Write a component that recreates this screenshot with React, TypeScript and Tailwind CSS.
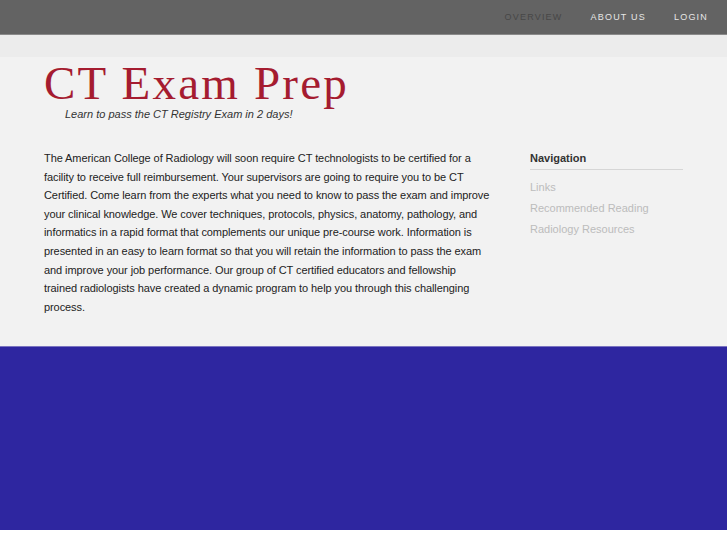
import React from 'react';

const navItems = [
  { label: 'OVERVIEW', active: true },
  { label: 'ABOUT US', active: false },
  { label: 'LOGIN', active: false },
];

const sideLinks = ['Links', 'Recommended Reading', 'Radiology Resources'];

const bodyLines = [
  'The American College of Radiology will soon require CT technologists to be certified for a',
  'facility to receive full reimbursement. Your supervisors are going to require you to be CT',
  'Certified. Come learn from the experts what you need to know to pass the exam and improve',
  'your clinical knowledge. We cover techniques, protocols, physics, anatomy, pathology, and',
  'informatics in a rapid format that complements our unique pre-course work. Information is',
  'presented in an easy to learn format so that you will retain the information to pass the exam',
  'and improve your job performance. Our group of CT certified educators and fellowship',
  'trained radiologists have created a dynamic program to help you through this challenging',
  'process.',
];

const App: React.FC = () => {
  return (
    <div className="min-h-[545px] bg-white font-['Liberation_Sans',Arial,sans-serif]">
      {/* top bar */}
      <header className="h-[35px] bg-[#636363] border-b border-[#8a8a8a] flex items-center justify-end pr-[19px]">
        <nav className="flex gap-[28px] pt-[2px]">
          {navItems.map((item) => (
            <a
              key={item.label}
              href="#"
              className={`text-[9px] tracking-[1.2px] ${item.active ? 'text-[#474747]' : 'text-[#e6e6e6]'}`}
            >
              {item.label}
            </a>
          ))}
        </nav>
      </header>
      <div className="h-[22px] bg-[#ececec]" />

      <main className="bg-[#f2f2f2] h-[289px] px-[44px]">
        <h1 className="font-['Liberation_Serif','Times_New_Roman',serif] text-[47px] leading-[50px] tracking-[2.2px] text-[#a51c30] pt-[1px]">
          CT Exam Prep
        </h1>
        <p className="italic text-[11px] leading-[12px] text-[#333] pl-[21px]">
          Learn to pass the CT Registry Exam in 2 days!
        </p>

        <div className="flex mt-[29px]">
          <p className="w-[450px] text-[11px] leading-[18.6px] tracking-[-0.08px] text-[#222] whitespace-nowrap">
            {bodyLines.map((line, i) => (
              <React.Fragment key={i}>
                {line}
                {i < bodyLines.length - 1 && <br />}
              </React.Fragment>
            ))}
          </p>
          <aside className="ml-[36px] w-[153px] pt-[1px]">
            <h2 className="text-[11px] font-bold text-[#333] pb-[3px] border-b border-[#d6d6d6] leading-[16px]">
              Navigation
            </h2>
            <ul className="mt-[9px] flex flex-col gap-[5px]">
              {sideLinks.map((l) => (
                <li key={l} className="text-[11px] leading-[16px] text-[#bcbcbc]">
                  {l}
                </li>
              ))}
            </ul>
          </aside>
        </div>
      </main>

      <section className="h-[184px] bg-[#2e26a0] border-t border-[#7a74c0]" />
    </div>
  );
};

export default App;
